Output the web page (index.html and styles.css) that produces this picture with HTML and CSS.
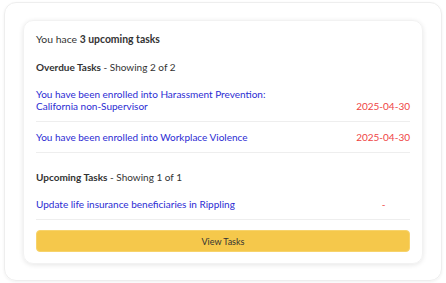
FILE: index.html
```html
<!DOCTYPE html>
<html lang="en">
<head>
    <meta charset="UTF-8">
    <meta name="viewport" content="width=device-width, initial-scale=1.0">
    <title>Upcoming Tasks</title>
    <link rel="stylesheet" href="styles.css">
</head>
<body>
    <div class="outer">
        <div class="card">
            <p class="summary">You hace <b>3 upcoming tasks</b></p>

            <div class="section">
                <h2><b>Overdue Tasks</b> - Showing 2 of 2</h2>
                <div class="task">
                    <a href="#">You have been enrolled into Harassment Prevention:<br>California non-Supervisor</a>
                    <span class="due">2025-04-30</span>
                </div>
                <div class="task">
                    <a href="#">You have been enrolled into Workplace Violence</a>
                    <span class="due">2025-04-30</span>
                </div>
            </div>

            <div class="section">
                <h2><b>Upcoming Tasks</b> - Showing 1 of 1</h2>
                <div class="task">
                    <a href="#">Update life insurance beneficiaries in Rippling</a>
                    <span class="due">-</span>
                </div>
            </div>

            <button>View Tasks</button>
        </div>
    </div>
</body>
</html>
```

FILE: styles.css
```css
body {
    margin: 0;
    background: #fff;
    font-family: Lato, "Open Sans", sans-serif;
    color: #333;
}
.outer {
    margin: 2px 4px;
    height: 279px;
    box-sizing: border-box;
    padding: 17px 18px;
    border: 1px solid #eee;
    border-radius: 12px;
    box-shadow: 0 1px 3px rgba(0,0,0,0.06);
}
.card {
    padding: 11px 12px 11px;
    border-radius: 10px;
    border: 1px solid #f2f2f2;
    box-shadow: 0 1px 5px rgba(0,0,0,0.1);
}
.summary {
    margin: 0;
    font-size: 10.4px;
    line-height: 14px;
}
.section { margin-top: 14px; }
.section + .section { margin-top: 17px; }
h2 {
    margin: 0 0 5px;
    font-size: 10px;
    line-height: 14px;
    font-weight: normal;
}
.task {
    display: flex;
    justify-content: space-between;
    align-items: flex-end;
    padding: 9px 0;
    border-bottom: 1px solid #eee;
    font-size: 10px;
    line-height: 12px;
}
.task a {
    color: #2b2bd3;
    text-decoration: none;
}
.due {
    flex-shrink: 0;
    min-width: 53px;
    white-space: nowrap;
    text-align: center;
    color: #ef4444;
}
button {
    display: block;
    width: 100%;
    height: 22px;
    margin-top: 10px;
    border: 1px solid #f7d36b;
    border-radius: 4px;
    background: #f5c84b;
    color: #333;
    font-family: Lato, sans-serif;
    font-size: 9px;
}
```
